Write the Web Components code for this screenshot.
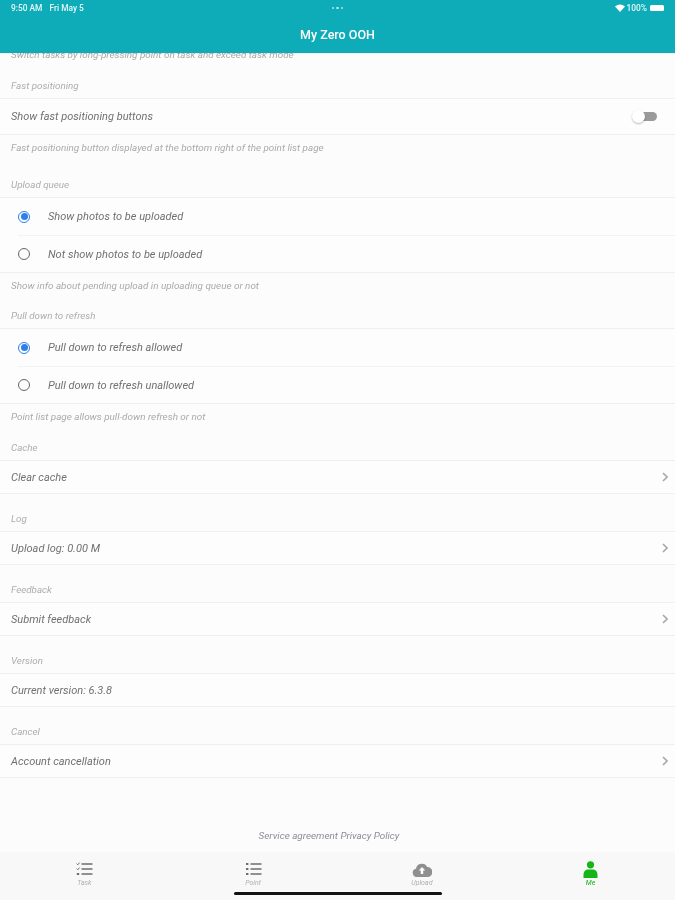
<!DOCTYPE html>
<html lang="en"><head><meta charset="utf-8"><title>My Zero OOH</title>
<style>
html,body{margin:0;padding:0;height:100%;background:#fcfcfc}
body{font-family:Roboto,"Liberation Sans",sans-serif;overflow:hidden}
</style></head><body>
<app-screen>
  <status-bar slot="status"></status-bar>
  <app-header slot="header" title="My Zero OOH"></app-header>
  <settings-section hint-only hint="Switch tasks by long-pressing point on task and exceed task mode" style="margin-top:-5px"></settings-section>
  <settings-section label="Fast positioning" hint="Fast positioning button displayed at the bottom right of the point list page" style="--lh:37px">
    <setting-row toggle style="--h:35px">Show fast positioning buttons</setting-row>
  </settings-section>
  <settings-section label="Upload queue" hint="Show info about pending upload in uploading queue or not" style="--lh:38px">
    <radio-row checked>Show photos to be uploaded</radio-row>
    <radio-row>Not show photos to be uploaded</radio-row>
  </settings-section>
  <settings-section label="Pull down to refresh" hint="Point list page allows pull-down refresh or not" style="--lh:31px">
    <radio-row checked>Pull down to refresh allowed</radio-row>
    <radio-row>Pull down to refresh unallowed</radio-row>
  </settings-section>
  <settings-section label="Cache" style="--lh:32px"><setting-row chevron>Clear cache</setting-row></settings-section>
  <settings-section label="Log"><setting-row chevron>Upload log: 0.00 M</setting-row></settings-section>
  <settings-section label="Feedback"><setting-row chevron>Submit feedback</setting-row></settings-section>
  <settings-section label="Version"><setting-row>Current version: 6.3.8</setting-row></settings-section>
  <settings-section label="Cancel"><setting-row chevron>Account cancellation</setting-row></settings-section>
  <legal-links></legal-links>
  <tab-bar slot="tabs"></tab-bar>
</app-screen>
<script>
function def(name, css, html){
  customElements.define(name, class extends HTMLElement{
    connectedCallback(){
      if(this.shadowRoot) return;
      const r=this.attachShadow({mode:'open'});
      const body=typeof html==='function'?html(this):html;
      r.innerHTML='<style>'+css+'</style>'+body;
    }
  });
}
def('app-screen',`
:host{display:flex;flex-direction:column;width:675px;height:900px;overflow:hidden;background:#fcfcfc;filter:blur(.6px)}
.top{flex:none;position:relative;z-index:2;background:#0eacb8;box-shadow:0 1px 1px rgba(0,0,0,.05)}
.main{flex:1;min-height:0;overflow:hidden}
.tabs{flex:none}
`,`<div class="top"><slot name="status"></slot><slot name="header"></slot></div>
<div class="main"><slot></slot></div><div class="tabs"><slot name="tabs"></slot></div>`);

def('status-bar',`
:host{display:flex;align-items:center;justify-content:space-between;height:16px;padding:0 11px 0 11px;color:#e6f7f8;font:500 8.4px Roboto,sans-serif}
.l,.r{display:flex;align-items:center;width:120px}
.l span+span{margin-left:7px}
.r{justify-content:flex-end;gap:2px}
.dots{display:flex;gap:2px}
.dots i{width:2.4px;height:2.4px;border-radius:50%;background:#a8e8ee}
.batt{width:14px;height:6px;border-radius:1.5px;background:#fff;margin-left:1px}
`,`<div class="l"><span>9:50 AM</span><span>Fri May 5</span></div>
<div class="dots"><i></i><i></i><i></i></div>
<div class="r"><svg width="10" height="8" viewBox="0 0 10 8"><path fill="#fff" d="M0 2.600C2.800 -.2 7.200 -.2 10 2.600L5 8z"/></svg><span>100%</span><span class="batt"></span></div>`);

def('app-header',`
:host{display:flex;align-items:center;justify-content:center;height:37px;color:#fff;font:500 12.500px Roboto,sans-serif}
`,h=>`<span>${h.getAttribute('title')}</span>`);

def('settings-section',`
:host{display:block}
.label{height:var(--lh,37px);box-sizing:border-box;padding:0 11px 6px;display:flex;align-items:flex-end;font:italic 400 9.8px/13px Roboto,sans-serif;color:#adadad}
.card{border-top:1px solid #efefef;border-bottom:1px solid #efefef;background:#fdfdfd}
.hint{height:24px;box-sizing:border-box;padding:0 11px;display:flex;align-items:center;font:italic 400 9.9px/13px Roboto,sans-serif;color:#aaaaaa;white-space:nowrap}
`,h=>{
  const label=h.getAttribute('label'),hint=h.getAttribute('hint');
  if(h.hasAttribute('hint-only')) return `<div class="hint" style="height:13px">${hint}</div>`;
  return `<div class="label">${label}</div><div class="card"><slot></slot></div>`+(hint?`<div class="hint">${hint}</div>`:'');
});

def('setting-row',`
:host{display:flex;align-items:center;justify-content:space-between;height:var(--h,32px);padding:0 7px 0 11px;font:italic 400 11px Roboto,sans-serif;color:#707070}
.sw{position:relative;width:26px;height:14px;margin-right:10px;flex:none}
.sw::before{content:"";position:absolute;left:2px;right:1px;top:2px;height:9px;border-radius:5px;background:#9a9a9a}
.sw::after{content:"";position:absolute;left:0;top:0;width:13px;height:13px;border-radius:50%;background:#fff;box-shadow:0 1px 2px rgba(0,0,0,.28)}
svg{display:block;flex:none}
`,h=>{
  let end='';
  if(h.hasAttribute('toggle')) end='<span class="sw"></span>';
  if(h.hasAttribute('chevron')) end='<svg width="6" height="10" viewBox="0 0 6 10"><path d="M1 1l4 4-4 4" fill="none" stroke="#a8a8a8" stroke-width="1.6"/></svg>';
  return `<span><slot></slot></span>${end}`;
});

def('radio-row',`
:host{display:block;height:38px;padding-left:18px;font:italic 400 11px Roboto,sans-serif;color:#707070}
:host(:last-child){height:36px}
.in{display:flex;align-items:center;gap:18px;height:100%;box-sizing:border-box;border-bottom:1px solid #f2f2f2}
:host(:last-child) .in{border-bottom:0}
.c{box-sizing:border-box;width:12px;height:12px;border-radius:50%;border:1.5px solid #666;flex:none;position:relative}
:host([checked]) .c{border-color:#2f7fe8}
:host([checked]) .c::after{content:"";position:absolute;inset:1.5px;border-radius:50%;background:#2f7fe8}
`,`<div class="in"><span class="c"></span><span><slot></slot></span></div>`);

def('legal-links',`
:host{display:block;text-align:center;margin-top:51px;padding-right:17px;font:italic 400 9.900px/13px Roboto,sans-serif;color:#8c8c9c}
`,`<span>Service agreement Privacy Policy</span>`);

def('tab-item',`
:host{flex:1;display:flex;flex-direction:column;align-items:center;font:italic 400 7px/9px Roboto,sans-serif;color:#b0b0b0}
:host([active]){color:#14b514}
.i{height:20px;display:flex;align-items:center;justify-content:center}
`,h=>`<div class="i"><slot></slot></div><span>${h.getAttribute('label')}</span>`);

def('tab-bar',`
:host{display:block;position:relative;height:48px;box-sizing:border-box;background:#f8f8f9;padding-top:7px}
.row{display:flex}
.home{position:absolute;left:50%;bottom:5px;margin-left:-104px;width:208px;height:3px;border-radius:2px;background:#111}
`,`<div class="row">
<tab-item label="Task"><svg width="17" height="14" viewBox="0 0 17 14" fill="none" stroke="#6e6e6e"><path d="M.6 1.600l1.200 1.200L3.600.6M.6 6.600l1.200 1.200L3.600 5.600" stroke-width="1"/><path d="M5.500 2h11M5.500 7h11M5.500 12h11" stroke-width="1.600"/><path d="M.8 12h2.400" stroke-width="2"/></svg></tab-item>
<tab-item label="Point"><svg width="17" height="14" viewBox="0 0 17 14" fill="none" stroke="#6e6e6e"><path d="M1 2h2.400M1 7h2.400M1 12h2.400" stroke-width="2.200"/><path d="M5.500 2h11M5.500 7h11M5.500 12h11" stroke-width="1.600"/></svg></tab-item>
<tab-item label="Upload"><svg width="20" height="15" viewBox="0 0 20 15"><path fill="#8f8f8f" d="M5 15a4.200 4.200 0 0 1-1-8.300A6 6 0 0 1 15.300 5 5 5 0 0 1 15.500 15z"/><path fill="#fff" d="M10 5l3.200 3.400h-2V12H8.800V8.400h-2z"/></svg></tab-item>
<tab-item active label="Me"><svg width="15" height="17" viewBox="0 0 15 17"><circle cx="7.500" cy="3.800" r="3.600" fill="#14b514"/><path fill="#14b514" d="M.5 17v-3.200C.5 10.500 3 8.600 5 8.600h5c2 0 4.500 1.900 4.500 5.200V17z"/></svg></tab-item>
</div><div class="home"></div>`);
</script>
</body></html>
